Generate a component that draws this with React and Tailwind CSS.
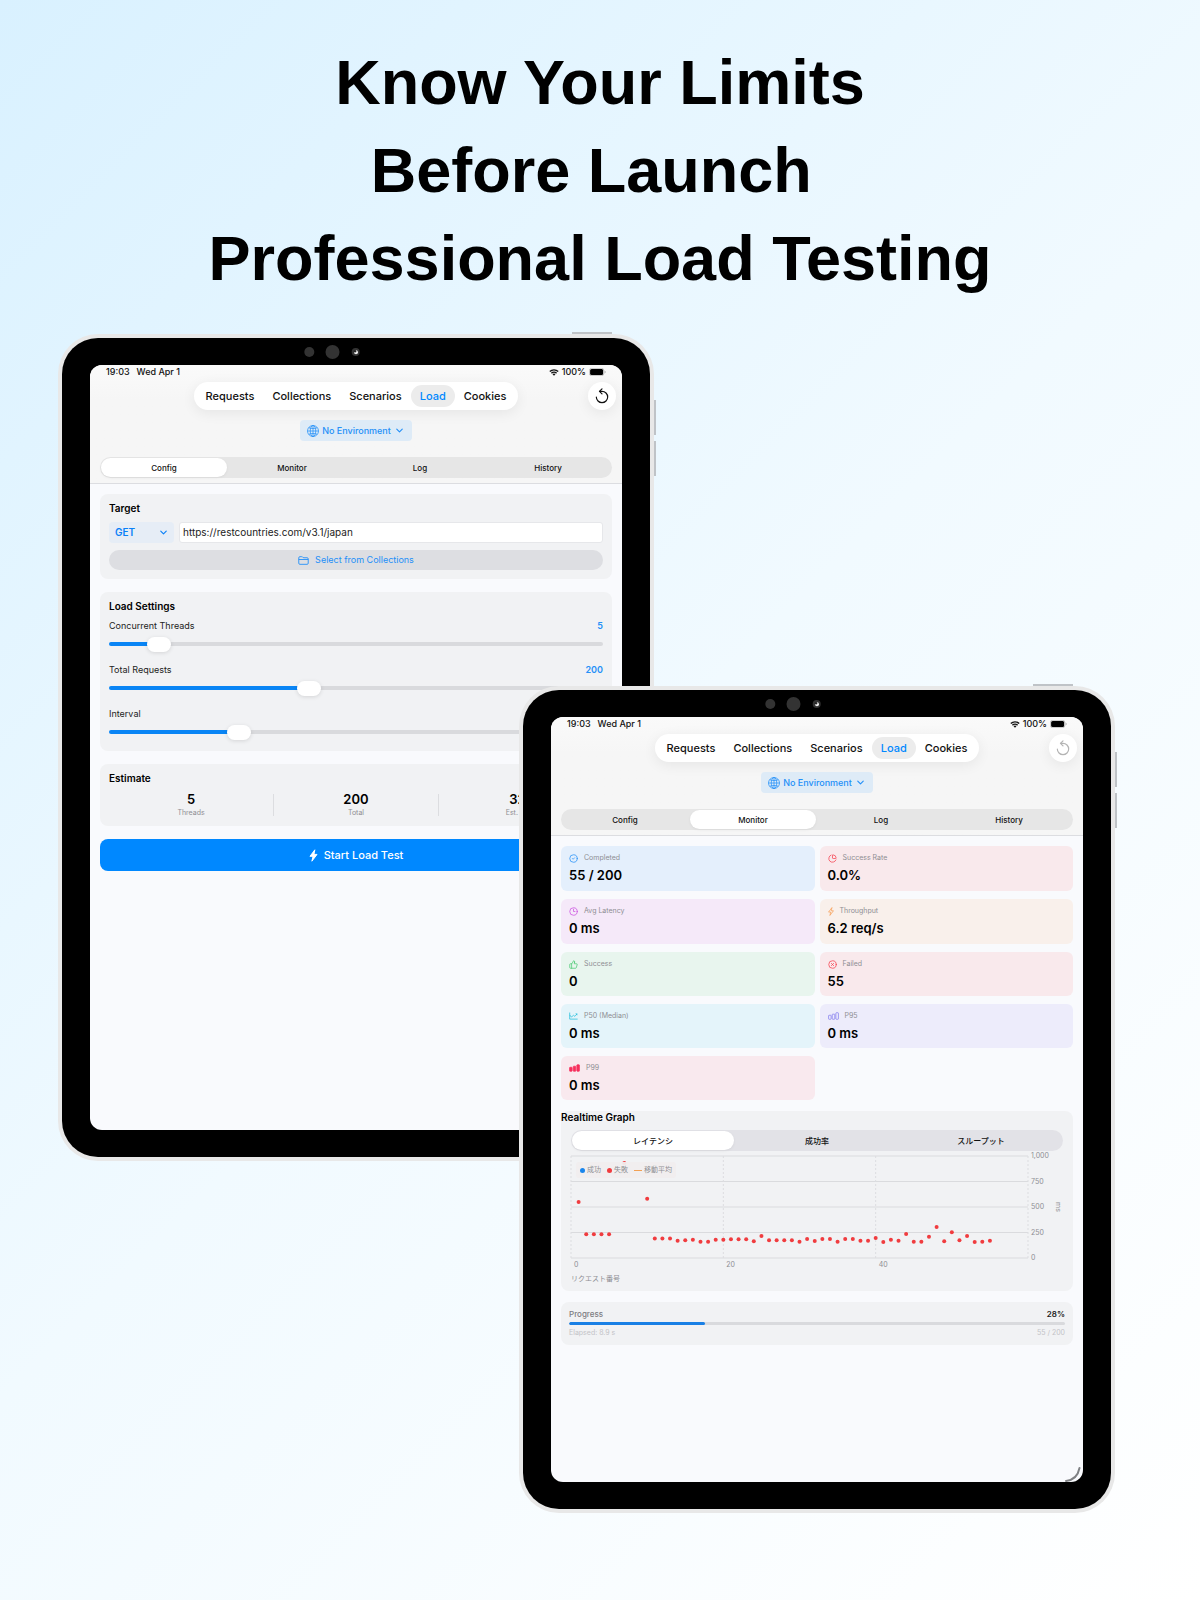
import clsx from 'clsx'
import { ChevronDown, CircleCheck, CircleX, Clock3, ChartPie, ThumbsUp } from 'lucide-react'

const NAV = ['Requests', 'Collections', 'Scenarios', 'Load', 'Cookies']
const TABS = ['Config', 'Monitor', 'Log', 'History']

// response time in ms, by request number
const LATENCY = [
  [1, 549], [2, 232], [3, 232], [4, 232], [5, 232], [7, 932], [10, 582],
  [11, 190], [12, 190], [13, 190], [14, 170], [15, 173], [16, 180], [17, 160],
  [18, 160], [19, 180], [20, 180], [21, 183], [22, 183], [23, 183], [24, 163],
  [25, 216], [26, 173], [27, 173], [28, 173], [29, 173], [30, 160], [31, 186],
  [32, 167], [33, 186], [34, 186], [35, 160], [36, 186], [37, 186], [38, 170],
  [39, 170], [40, 196], [41, 157], [42, 180], [43, 170], [44, 235], [45, 160],
  [46, 160], [47, 209], [48, 304], [49, 163], [50, 252], [51, 173], [52, 216],
  [53, 157], [54, 160], [55, 170],
]

function WifiIcon() {
  return (
    <svg viewBox="0 0 18 13" className="w-[10px] h-[7px]" fill="none" stroke="#111" strokeWidth="2.6">
      <path d="M1.2 4.8a11 11 0 0 1 15.6 0" />
      <path d="M4.2 7.9a6.8 6.8 0 0 1 9.6 0" />
      <path d="M9 12.6 6.3 9.9a3.8 3.8 0 0 1 5.4 0z" fill="#111" stroke="none" />
    </svg>
  )
}

function BatteryIcon() {
  return (
    <svg viewBox="0 0 34 16" className="w-[17px] h-2">
      <rect x="0.7" y="0.7" width="29" height="14.6" rx="4.5" fill="none" stroke="#aaa" strokeWidth="1.4" />
      <rect x="2.2" y="2.2" width="26" height="11.6" rx="3" fill="#000" />
      <path d="M31.4 5.4c1.4.5 2 1.4 2 2.6s-.6 2.1-2 2.6z" fill="#aaa" />
    </svg>
  )
}

function GlobeIcon() {
  return (
    <svg viewBox="0 0 24 24" className="size-3" fill="none" stroke="currentColor" strokeWidth="1.5">
      <circle cx="12" cy="12" r="11" />
      <ellipse cx="12" cy="12" rx="5.5" ry="11" />
      <path d="M12 1v22M1 12h22M3.5 5.5c5 2 12 2 17 0M3.5 18.5c5-2 12-2 17 0" />
    </svg>
  )
}

function ResetIcon() {
  return (
    <svg viewBox="0 0 24 24" className="size-4" fill="none" stroke="currentColor" strokeWidth="1.8" strokeLinecap="round" strokeLinejoin="round">
      <path d="M3.5 13.5a8.5 8.5 0 1 0 8.5-8.5H8.5" />
      <path d="M12 1.2 8.2 5l3.8 3.8" />
    </svg>
  )
}

function FolderIcon() {
  return (
    <svg viewBox="0 0 24 20" className="w-[11px] h-[9px]" fill="none" stroke="currentColor" strokeWidth="2">
      <path d="M1.5 16V4c0-1.7.9-2.5 2.5-2.5h4.2c.8 0 1.3.2 1.9.8l.9.9c.5.5 1 .7 1.7.7H20c1.6 0 2.5.8 2.5 2.5V16c0 1.7-.9 2.5-2.5 2.5H4c-1.6 0-2.5-.8-2.5-2.5z" />
      <path d="M1.5 7.8h21" />
    </svg>
  )
}

function BoltIcon({ filled, className }) {
  return (
    <svg viewBox="0 0 16 24" className={className} fill={filled ? 'currentColor' : 'none'} stroke="currentColor" strokeWidth="1.8" strokeLinejoin="round">
      <path d="M10.5 1.5 1.5 13.5h5.7L5 22.5l9.5-12.5H8.8z" />
    </svg>
  )
}

function TrendIcon() {
  return (
    <svg viewBox="0 0 26 22" className="w-[9px] h-2" fill="none" stroke="currentColor" strokeWidth="2.2">
      <path d="M2 1v19h23" />
      <path d="m2 8 5 6 6-5 4 3 6-7" />
      <path d="M18 3.5h6v6z" fill="currentColor" stroke="none" />
    </svg>
  )
}

function BarsIcon({ filled }) {
  return (
    <svg viewBox="0 0 30 22" className="w-[11px] h-2" fill={filled ? 'currentColor' : 'none'} stroke="currentColor" strokeWidth="2">
      <rect x="1.5" y="9" width="7" height="11" rx="1.5" />
      <rect x="11.5" y="6" width="7" height="14" rx="1.5" />
      <rect x="21.5" y="2" width="7" height="18" rx="1.5" />
    </svg>
  )
}

function Tablet({ className, children }) {
  return (
    <div className={clsx('relative w-full max-w-[596px] rounded-[40px] bg-[#e8e8e8] p-1', className)}>
      <span className="absolute -top-[2px] right-[42px] h-[2px] w-10 bg-[#bfc3c7]" />
      <span className="absolute top-[66px] -right-[2px] h-[35px] w-[2px] bg-[#bfc3c7]" />
      <span className="absolute top-[107px] -right-[2px] h-[35px] w-[2px] bg-[#bfc3c7]" />
      <div className="rounded-[36px] bg-black px-7 pb-[27px]">
        <div className="flex h-[27px] items-center justify-center">
          <svg viewBox="0 0 104 14" className="w-[104px] h-[14px]">
            <circle cx="5.3" cy="7" r="5" fill="#333" />
            <circle cx="28.5" cy="7" r="7" fill="#333" />
            <circle cx="51.7" cy="7" r="4" fill="#333" />
            <circle cx="52" cy="7.3" r="2" fill="#eee" />
            <circle cx="51" cy="6.3" r="1.2" fill="#222" />
          </svg>
        </div>
        <div className="relative flex aspect-[532/765] flex-col overflow-hidden rounded-xl bg-[#f9fafd]">
          {children}
        </div>
      </div>
    </div>
  )
}

function ScreenHeader({ activeTab, canReset }) {
  return (
    <header className="border-b border-[#dcdde1] bg-linear-to-b from-[#fafafa] to-[#f6f6f6] to-30% pb-[5px]">
      <div className="flex h-[14px] items-center justify-between px-4 text-[9px] leading-[14px] font-medium text-[#111]">
        <div className="flex gap-[7px]">
          <span>19:03</span>
          <span>Wed Apr 1</span>
        </div>
        <div className="flex items-center gap-[3px]">
          <WifiIcon />
          <span>100%</span>
          <BatteryIcon />
        </div>
      </div>

      <div className="mt-[3px] grid grid-cols-[1fr_auto_1fr] items-center px-[6px]">
        <nav className="col-start-2 flex h-7 items-center rounded-full bg-white px-[3px] shadow-[0_3px_14px_rgba(0,0,0,0.07)]">
          {NAV.map((item) => (
            <a
              key={item}
              href="#"
              className={clsx(
                'rounded-full px-[9px] text-[11px] leading-[22px] font-medium',
                item === 'Load' ? 'bg-[#ececec] text-[#0088ff]' : 'text-[#111]'
              )}
            >
              {item}
            </a>
          ))}
        </nav>
        <button
          aria-label="Reset"
          disabled={!canReset}
          className="flex size-7 items-center justify-center justify-self-end rounded-full bg-white text-[#111] shadow-[0_3px_14px_rgba(0,0,0,0.07)] disabled:text-[#b4b4b4]"
        >
          <ResetIcon />
        </button>
      </div>

      <div className="mt-[10px] flex justify-center">
        <button className="flex h-[21px] items-center gap-[3px] rounded bg-[#deebf7] px-[7px] text-[9px] font-medium text-[#2490f8]">
          <GlobeIcon />
          No Environment
          <ChevronDown className="size-[11px]" strokeWidth={2.5} />
        </button>
      </div>

      <div className="mx-[10px] mt-4">
        <Segmented items={TABS} active={activeTab} />
      </div>
    </header>
  )
}

function Segmented({ items, active, dark }) {
  return (
    <div role="tablist" className={clsx('flex h-[21px] rounded-full py-px', dark ? 'bg-[#e2e2e7]' : 'bg-[#e6e6e6]')}>
      {items.map((item) => (
        <div key={item} className="flex flex-1 px-px">
          <button
            role="tab"
            aria-selected={item === active}
            className={clsx(
              'flex-1 rounded-full text-[8px] font-medium text-[#111]',
              item === active && 'bg-white shadow-[0_1px_3px_rgba(0,0,0,0.06)]'
            )}
          >
            {item}
          </button>
        </div>
      ))}
    </div>
  )
}

function Slider({ id, label, value, percent }) {
  return (
    <div className="flex flex-col gap-[10px]">
      <div className="flex justify-between text-[9px] leading-[13px]">
        <label htmlFor={id} className="text-[#222]">{label}</label>
        <span className="font-semibold text-[#2490f8]">{value}</span>
      </div>
      <input
        id={id}
        type="range"
        defaultValue={percent}
        className="h-1 w-full appearance-none rounded-full [&::-webkit-slider-thumb]:h-[15px] [&::-webkit-slider-thumb]:w-6 [&::-webkit-slider-thumb]:appearance-none [&::-webkit-slider-thumb]:rounded-full [&::-webkit-slider-thumb]:bg-white [&::-webkit-slider-thumb]:shadow-[0_1px_4px_rgba(0,0,0,0.12)]"
        style={{ backgroundImage: `linear-gradient(to right, #0a85f5 ${percent + 2}%, #d9dadd ${percent + 2}%)` }}
      />
    </div>
  )
}

function Estimate({ value, label }) {
  return (
    <div className="flex-1 text-center">
      <p className="text-[13px] leading-[16px] font-semibold">{value}</p>
      <p className="text-[7px] leading-[11px] text-[#8e8e93]">{label}</p>
    </div>
  )
}

function ConfigScreen() {
  return (
    <>
      <ScreenHeader activeTab="Config" canReset />
      <main className="flex flex-col gap-[13px] px-[10px] pt-[10px]">
        <section className="rounded-lg bg-[#f1f2f4] px-[9px] pt-2 pb-[9px]">
          <h2 className="text-[10px] leading-[13px] font-semibold">Target</h2>
          <div className="mt-[7px] flex h-[21px] gap-[5px]">
            <div className="relative flex items-center">
              <select aria-label="Method" className="h-[21px] w-[65px] appearance-none rounded bg-[#e6edf6] pl-[6px] text-[10px] font-semibold text-[#0a80f8]">
                <option>GET</option>
              </select>
              <ChevronDown className="pointer-events-none absolute right-[5px] size-[11px] text-[#0a80f8]" strokeWidth={2.5} />
            </div>
            <input
              aria-label="URL"
              defaultValue="https://restcountries.com/v3.1/japan"
              className="min-w-0 flex-1 rounded-[3px] border border-[#e6e7ea] bg-white px-[3px] text-[10px] text-[#222]"
            />
          </div>
          <button className="mt-[7px] flex h-5 w-full items-center justify-center gap-[6px] rounded-full bg-[#dddee2] text-[9px] text-[#2490f8]">
            <FolderIcon />
            Select from Collections
          </button>
        </section>

        <section className="rounded-lg bg-[#f1f2f4] px-[9px] pt-2 pb-[17px]">
          <h2 className="text-[10px] leading-[13px] font-semibold">Load Settings</h2>
          <div className="mt-[6px] flex flex-col gap-[17px]">
            <Slider id="threads" label="Concurrent Threads" value="5" percent={8} />
            <Slider id="total" label="Total Requests" value="200" percent={40} />
            <Slider id="interval" label="Interval" value="100 ms" percent={25} />
          </div>
        </section>

        <section className="rounded-lg bg-[#f1f2f4] px-[9px] py-2">
          <h2 className="text-[10px] leading-[13px] font-semibold">Estimate</h2>
          <div className="mt-[6px] flex items-center">
            <Estimate value="5" label="Threads" />
            <span className="h-[22px] w-px bg-[#dcdde0]" />
            <Estimate value="200" label="Total" />
            <span className="h-[22px] w-px bg-[#dcdde0]" />
            <Estimate value="32s" label="Est. Time" />
          </div>
        </section>

        <button className="flex h-8 items-center justify-center gap-[6px] rounded-lg bg-[#0088ff] text-[11px] font-medium text-white">
          <BoltIcon filled className="w-[9px] h-[13px]" />
          Start Load Test
        </button>
      </main>
    </>
  )
}

function StatCard({ icon, label, value, bg, color }) {
  return (
    <div className={clsx('rounded-md px-2 pt-[7px]', bg)}>
      <div className="flex items-center gap-[6px] text-[7px] leading-[10px] text-[#8e8e93]">
        <span className={color}>{icon}</span>
        {label}
      </div>
      <p className="mt-1 text-[13px] leading-[16px] font-semibold">{value}</p>
    </div>
  )
}

function LatencyChart() {
  return (
    <div className="mt-[5px] text-[7px] leading-[10px] text-[#8e8e93]">
      <div className="flex">
        <div className="relative h-[102px] flex-1">
          <svg className="h-full w-full overflow-visible">
            {[0, 25, 50, 75, 100].map((y) => (
              <line key={y} x1="0" x2="100%" y1={`${y}%`} y2={`${y}%`} stroke="#dadbde" />
            ))}
            {[0, 20, 40, 60].map((x) => (
              <line key={x} x1={`${(x / 60) * 100}%`} x2={`${(x / 60) * 100}%`} y1="0" y2="100%" stroke="#dcdde0" strokeDasharray="2 2" />
            ))}
            {LATENCY.map(([n, ms]) => (
              <circle key={n} cx={`${(n / 60) * 100}%`} cy={`${100 - ms / 10}%`} r="2" fill="#f03c3f" />
            ))}
          </svg>
          <div className="absolute top-[6px] left-[5px] flex h-4 items-center gap-[6px] rounded-[3px] bg-[#f0edee]/95 px-[4px]">
            <span className="flex items-center gap-[2px]"><i className="size-[5px] rounded-full bg-[#1a86ec]" />成功</span>
            <span className="flex items-center gap-[2px]"><i className="size-[5px] rounded-full bg-[#f03c3f]" />失敗</span>
            <span className="flex items-center gap-[2px]"><i className="h-px w-2 bg-[#f2a154]" />移動平均</span>
          </div>
        </div>
        <div className="-my-[5px] flex w-[35px] items-center justify-between pl-[3px]">
          <div className="flex h-full flex-col justify-between">
            {['1,000', '750', '500', '250', '0'].map((t) => <span key={t}>{t}</span>)}
          </div>
          <span className="[writing-mode:vertical-rl]">ms</span>
        </div>
      </div>
      <div className="mt-[2px] mr-[35px] grid grid-cols-3">
        <span className="pl-[3px]">0</span>
        <span className="pl-[3px]">20</span>
        <span className="pl-[3px]">40</span>
      </div>
      <p className="mt-1">リクエスト番号</p>
    </div>
  )
}

function MonitorScreen() {
  return (
    <>
      <ScreenHeader activeTab="Monitor" />
      <main className="px-[10px] pt-[10px]">
        <div className="grid grid-cols-2 grid-rows-[45px_45px_44px_44px_44px] gap-x-[5px] gap-y-2">
          <StatCard icon={<CircleCheck className="size-[9px]" />} label="Completed" value="55 / 200" bg="bg-[#e4effc]" color="text-[#2490f8]" />
          <StatCard icon={<ChartPie className="size-[9px]" />} label="Success Rate" value="0.0%" bg="bg-[#f9e9ec]" color="text-[#f5404f]" />
          <StatCard icon={<Clock3 className="size-[9px]" />} label="Avg Latency" value="0 ms" bg="bg-[#f5e9f9]" color="text-[#cb4fe0]" />
          <StatCard icon={<BoltIcon className="w-[6px] h-[9px]" />} label="Throughput" value="6.2 req/s" bg="bg-[#f9f0eb]" color="text-[#f7984a]" />
          <StatCard icon={<ThumbsUp className="size-[9px]" />} label="Success" value="0" bg="bg-[#e8f5ee]" color="text-[#4cc974]" />
          <StatCard icon={<CircleX className="size-[9px]" />} label="Failed" value="55" bg="bg-[#f9e9ec]" color="text-[#f5404f]" />
          <StatCard icon={<TrendIcon />} label="P50 (Median)" value="0 ms" bg="bg-[#e4f4fa]" color="text-[#27bfdc]" />
          <StatCard icon={<BarsIcon />} label="P95" value="0 ms" bg="bg-[#edecfb]" color="text-[#8079ee]" />
          <StatCard icon={<BarsIcon filled />} label="P99" value="0 ms" bg="bg-[#f9e9ee]" color="text-[#f72f5c]" />
        </div>

        <section className="mt-[11px] rounded-lg bg-[#f1f2f4] pb-[7px]">
          <h2 className="text-[10px] leading-[13px] font-semibold">Realtime Graph</h2>
          <div className="mt-[6px] px-[10px]">
            <Segmented items={['レイテンシ', '成功率', 'スループット']} active="レイテンシ" dark />
            <LatencyChart />
          </div>
        </section>

        <section className="mt-[11px] rounded-lg bg-[#f1f2f4] px-2 py-[7px]">
          <div className="flex justify-between text-[8px] leading-[10px] font-medium">
            <span className="text-[#7c7c81]">Progress</span>
            <span className="font-semibold text-[#222]">28%</span>
          </div>
          <div className="mt-[3px] h-[3px] overflow-hidden rounded-full bg-[#d9dadd]">
            <div className="h-full rounded-full bg-[#1a80e5]" style={{ width: `${(55 / 200) * 100}%` }} />
          </div>
          <div className="mt-[3px] flex justify-between text-[7px] leading-[10px] text-[#c3c3c7]">
            <span>Elapsed: 8.9 s</span>
            <span>55 / 200</span>
          </div>
        </section>
      </main>
      <svg viewBox="0 0 16 16" className="absolute right-[2px] bottom-0 size-4" fill="none" stroke="#808285" strokeWidth="2" strokeLinecap="round">
        <path d="M1 15C9 14 13 10 14.5 2" />
      </svg>
    </>
  )
}

export default function App() {
  return (
    <div className="min-h-screen overflow-hidden bg-linear-[135deg] from-[#d9f1ff] via-[#f1faff] to-white pt-[38px] pb-[87px] font-['Inter','Noto_Sans_CJK_JP',sans-serif] text-black">
      <h1 className="text-center font-['Liberation_Sans',Arial,sans-serif] text-[63px] leading-[88px] font-bold whitespace-pre">
        Know Your Limits{'\n'}
        Before Launch {'\n'}
        Professional Load Testing
      </h1>
      <div className="mt-8 flex flex-col">
        <Tablet className="ml-[58px]">
          <ConfigScreen />
        </Tablet>
        <Tablet className="-mt-[475px] mr-[85px] self-end">
          <MonitorScreen />
        </Tablet>
      </div>
    </div>
  )
}
